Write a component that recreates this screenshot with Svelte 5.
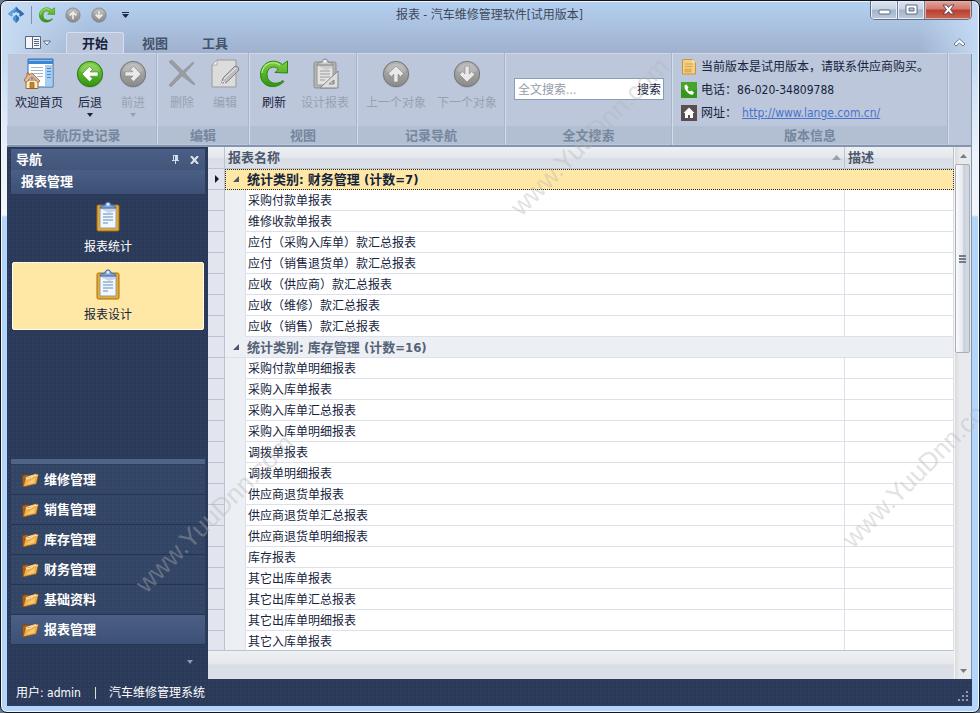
<script lang="ts">
	const tabs = ['开始', '视图', '工具'];
	const modules = ['维修管理', '销售管理', '库存管理', '财务管理', '基础资料', '报表管理'];

	const ribbon = [
		{
			title: '导航历史记录',
			items: [
				{ icon: 'home', label: '欢迎首页' },
				{ icon: 'back', label: '后退', menu: true },
				{ icon: 'forward', label: '前进', menu: true, disabled: true }
			]
		},
		{
			title: '编辑',
			items: [
				{ icon: 'delete', label: '删除', disabled: true },
				{ icon: 'edit', label: '编辑', disabled: true }
			]
		},
		{
			title: '视图',
			items: [
				{ icon: 'refresh', label: '刷新' },
				{ icon: 'design', label: '设计报表', disabled: true }
			]
		},
		{
			title: '记录导航',
			items: [
				{ icon: 'up', label: '上一个对象', disabled: true },
				{ icon: 'down', label: '下一个对象', disabled: true }
			]
		}
	];

	const groups = [
		{
			name: '财务管理',
			count: 7,
			rows: [
				'采购付款单报表',
				'维修收款单报表',
				'应付（采购入库单）款汇总报表',
				'应付（销售退货单）款汇总报表',
				'应收（供应商）款汇总报表',
				'应收（维修）款汇总报表',
				'应收（销售）款汇总报表'
			]
		},
		{
			name: '库存管理',
			count: 16,
			rows: [
				'采购付款单明细报表',
				'采购入库单报表',
				'采购入库单汇总报表',
				'采购入库单明细报表',
				'调拨单报表',
				'调拨单明细报表',
				'供应商退货单报表',
				'供应商退货单汇总报表',
				'供应商退货单明细报表',
				'库存报表',
				'其它出库单报表',
				'其它出库单汇总报表',
				'其它出库单明细报表',
				'其它入库单报表'
			]
		}
	];

	let activeTab = $state('开始');
	let activeItem = $state('报表设计');
	let activeModule = $state('报表管理');
	let query = $state('');
</script>

{#snippet arrowDisc(angle: number, green: boolean)}
	<circle cx="16" cy="16.5" r="13.2" fill="#7c8494" opacity=".35" />
	<circle cx="16" cy="16" r="12.6" fill={green ? 'url(#green)' : 'url(#grey)'} stroke={green ? '#2d7a12' : '#777'} />
	<path d="M6 13a10.5 10.5 0 0 1 20 0q-10 5-20 0z" fill="#fff" opacity=".18" />
	<path
		transform="rotate({angle} 16 16)"
		d="M8 16l7.500-7.500 3 3-2.500 2.500h8v4.200h-8l2.500 2.500-3 3z"
		fill={green ? '#fff' : '#e9e9e9'}
		stroke={green ? '#3f8f1c' : '#868686'}
		stroke-width=".6"
		stroke-linejoin="round"
	/>
{/snippet}

{#snippet clipboard(grey: boolean)}
	<rect x="5" y="4" width="22" height="26" rx="1.5" fill={grey ? '#b4b4b4' : '#e6ac2b'} stroke={grey ? '#8d8d8d' : '#a86a10'} />
	<path d="M8 7h16v20H8z" fill={grey ? '#e3e3e3' : '#f4f8fd'} stroke={grey ? '#999' : '#8d9db8'} />
	<path d="M9 8h14v2l-6 2z" fill={grey ? '#ccc' : '#c6d4e6'} />
	<path d="M11 13h10M11 16h10M11 19h10M11 22h5" stroke={grey ? '#999' : '#5f8ac4'} />
	<path d="M8 7c0-3 4-2 5-3 0-4 6-4 6 0 1 1 5 0 5 3z" fill={grey ? '#c9c9c9' : '#7ea8dd'} stroke={grey ? '#888' : '#3c66a4'} />
	<circle cx="16" cy="3.4" r="1.4" fill="#fff" opacity=".8" />
{/snippet}

{#snippet icon(name: string, size = 32)}
	<svg width={size} height={size} viewBox="0 0 32 32" aria-hidden="true">
		{#if name === 'home'}
			<path d="M5 1h25v28H5z" fill="#fff" stroke="#2f6fb0" />
			<path d="M5 1h25v5H5z" fill="#3d86cf" />
			<path d="M6 2h23v1H6z" fill="#8fc0ef" />
			<path d="M22 7h7v21h-7z" fill="#a9cdf0" />
			<path d="M8 9.500h12M8 12.500h12M10 15.500h10M14 18.500h6" stroke="#9fb6cf" />
			<path d="M24 10.500h4M24 13.500h4M24 16.500h4M24 19.500h4" stroke="#4d8bc9" />
			<path d="M3 22h12v8.500H3z" fill="#f9e9c8" stroke="#9b6a33" />
			<path d="M1 22l3-4v-3h2v2l3-2 8 8-2 1.500-6-6-6 6z" fill="#e7b98a" stroke="#9a5a2b" stroke-width=".8" />
			<path d="M7 24.500h4v6H7z" fill="#c98524" stroke="#85531a" stroke-width=".6" />
			<circle cx="9" cy="20.5" r="1.2" fill="#4b93d6" />
		{:else if name === 'back'}
			{@render arrowDisc(0, true)}
		{:else if name === 'forward'}
			{@render arrowDisc(180, false)}
		{:else if name === 'up'}
			{@render arrowDisc(90, false)}
		{:else if name === 'down'}
			{@render arrowDisc(270, false)}
		{:else if name === 'delete'}
			<path d="M4 3l2-1 11 11L27 4l1 1-9 10 10 11-1 1-12-9L5 29l-2-2 11-12L3 4z" fill="#9a9ca1" stroke="#888b91" stroke-width=".5" />
		{:else if name === 'edit'}
			<path d="M8 2h19v27H3V7z" fill="#dcdcdc" stroke="#999" />
			<path d="M8 2v5H3z" fill="#f3f3f3" stroke="#999" stroke-width=".7" />
			<path d="M12 27l2-7L26 8q4 0 4 4L18 24z" fill="#bdbdbd" stroke="#858585" />
			<path d="M15 21L27 10M12 27l4-2-2-2z" stroke="#f0f0f0" fill="#777" />
		{:else if name === 'refresh'}
			<path
				d="M24.500 6.500C14-1.500 2.500 6 2.500 16.500c0 12 14 16.500 23.500 7l-1-1c-7 5.500-16 2.500-16-6C9 9.500 15.500 7 20.500 11L17 14.500l12.500.5V3z"
				fill="url(#green)"
				stroke="#2d8217"
			/>
			<path d="M4 15C5 6 14 2 22 7" fill="none" stroke="#b6ee8c" stroke-width="1.200" />
		{:else if name === 'design'}
			{@render clipboard(true)}
			<path d="M29 13v17H11zM25 22v4h-5z" fill="#dedede" fill-rule="evenodd" stroke="#858585" />
		{:else if name === 'clipboard'}
			{@render clipboard(false)}
		{:else if name === 'folder'}
			<path d="M2 8l9-2 3 2 14-4 1 16-21 8H3z" fill="#a8601c" stroke="#6b3a0c" />
			<path d="M8 11l19-6v6l-17 6z" fill="#fbeecb" />
			<path d="M4 28L8 13l10-2 3-3 10-2-4 17z" fill="#eeb04e" stroke="#85501a" />
			<path d="M9 14l9-2 3-3 9-2" fill="none" stroke="#ffebb8" stroke-width="2" />
			<path d="M8 24L25 12l-2 9z" fill="#ffd88a" opacity=".7" />
		{:else if name === 'logo'}
			<path d="M16 1l6 6v6l-6-4z" fill="#2f6fb6" />
			<path d="M16 1l-6 6v6l6-4z" fill="#5aa5e4" />
			<path d="M9 7l7 2-7.500 10L1 14z" fill="#5ba3e0" />
			<path d="M23 7l-7 2 7.500 10L31 14z" fill="#2e6bb0" />
			<path d="M16 8l7 6-7 6-7-6z" fill="#cfe2f6" />
			<path d="M16 6l5 5-2 2-3-3-3 3-2-2z" fill="#3f86cc" />
			<path d="M16 15l5.500 5.500v4L16 30l-5.500-5.500v-4z" fill="#4a93d8" />
			<path d="M16 15l5.500 5.500v4L16 30z" fill="#3275bb" />
		{:else if name === 'note'}
			<path d="M3 1h20l6 6v23H3z" fill="#f3cf80" stroke="#c49444" stroke-width="2" />
			<path d="M23 1v6h6z" fill="#fff0c4" />
			<path d="M8 10h15M8 15h15" stroke="#d0a050" stroke-width="2" />
			<path d="M8 20h12v6H8z" fill="#e5b45c" stroke="#c9953f" />
		{:else if name === 'phone'}
			<rect width="32" height="32" fill="#34961b" />
			<path d="M0 0h32v14Q16 22 0 14z" fill="#5fb844" opacity=".45" />
			<path d="M7 7l4-2 4 6-2 3q1 4 5 5l3-2 5 4-2 4q-5 2-11-4Q6 14 7 7z" fill="#fff" />
		{:else if name === 'site'}
			<rect width="32" height="32" fill="#5c4d50" />
			<path d="M16 5L5 16h3v10h6v-6h4v6h6V16h3z" fill="#fff" />
		{/if}
	</svg>
{/snippet}

<svg class="defs" width="0" height="0" aria-hidden="true">
	<defs>
		<linearGradient id="green" x1="0" y1="0" x2="0" y2="1">
			<stop offset="0" stop-color="#7fd040" />
			<stop offset="1" stop-color="#2f9512" />
		</linearGradient>
		<linearGradient id="grey" x1="0" y1="0" x2="0" y2="1">
			<stop offset="0" stop-color="#b5b5b5" />
			<stop offset="1" stop-color="#8a8a8a" />
		</linearGradient>
	</defs>
</svg>

<div class="window">
	<header class="titlebar">
		<div class="quick">
			{@render icon('logo', 18)}
			<span class="rule"></span>
			<button aria-label="刷新">{@render icon('refresh', 18)}</button>
			<button aria-label="上一个对象">{@render icon('up', 18)}</button>
			<button aria-label="下一个对象">{@render icon('down', 18)}</button>
			<button aria-label="自定义">
				<svg width="9" height="6" viewBox="0 0 9 6"><path d="M1 0h7v1H1zM1 2h7L4.500 6z" fill="#1d2a42" /></svg>
			</button>
		</div>
		<h1>报表 - 汽车维修管理软件[试用版本]</h1>
		<div class="controls">
			<button aria-label="最小化">
				<svg width="13" height="12" viewBox="0 0 13 12"><rect x="1" y="6" width="11" height="4" rx="1" fill="#fff" stroke="#5a6a80" /></svg>
			</button>
			<button aria-label="最大化">
				<svg width="13" height="12" viewBox="0 0 13 12"><path d="M1 1h11v9H1zM4 4h5v3H4z" fill="#fff" fill-rule="evenodd" stroke="#5a6a80" /></svg>
			</button>
			<button class="close" aria-label="关闭">
				<svg width="13" height="12" viewBox="0 0 13 12"><path d="M1 1h3.500l2 2.500L8.500 1H12L8.500 5.500 12 10H8.500l-2-2.500-2 2.500H1l3.500-4.500z" fill="#fff" stroke="#5c4550" /></svg>
			</button>
		</div>
	</header>

	<nav class="tabs">
		<button class="app-menu" aria-label="菜单">
			<svg width="26" height="13" viewBox="0 0 26 13">
				<path d="M.5.500h15v12H.5z" fill="#f3f6fa" stroke="#59677e" />
				<path d="M7.500 1v11M9 3.500h5M9 5.500h5M9 7.500h5M9 9.500h5" stroke="#59677e" />
				<path d="M18.500 5h7L22 9z" fill="#fff" stroke="#59677e" />
			</svg>
		</button>
		{#each tabs as tab}
			<button class="tab" class:active={tab === activeTab} onclick={() => (activeTab = tab)}>{tab}</button>
		{/each}
		<button class="collapse" aria-label="折叠功能区">
			<svg width="13" height="9" viewBox="0 0 13 9"><path d="M1 6l5.500-5L12 6l-2 2-3.500-3L3 8z" fill="#fff" stroke="#66748a" /></svg>
		</button>
	</nav>

	<section class="ribbon">
		{#each ribbon as group}
			<div class="group">
				<div class="tools">
					{#each group.items as item}
						<button class="tool" disabled={item.disabled}>
							{@render icon(item.icon)}
							<span>{item.label}</span>
							{#if item.menu}<i class="caret"></i>{/if}
						</button>
					{/each}
				</div>
				<h2>{group.title}</h2>
			</div>
		{/each}
		<div class="group search-group">
			<form class="search" onsubmit={(e) => e.preventDefault()}>
				<input type="text" aria-label="全文搜索" placeholder="全文搜索..." bind:value={query} />
				<button>搜索</button>
			</form>
			<h2>全文搜索</h2>
		</div>
		<div class="group about">
			<div class="info">
				<p>{@render icon('note', 16)}当前版本是试用版本，请联系供应商购买。</p>
				<p>{@render icon('phone', 16)}电话：<span>86-020-34809788</span></p>
				<p>{@render icon('site', 16)}网址：<a href="http://www.lange.com.cn/">http://www.lange.com.cn/</a></p>
			</div>
			<h2>版本信息</h2>
		</div>
	</section>

	<main>
		<aside>
			<div class="panel-head">
				<h3>导航</h3>
				<button aria-label="固定">
					<svg width="7" height="9" viewBox="0 0 7 9"><path d="M2 0h4v5h1v1H4v3H3V6H0V5h1V0zM2 1v4h1V1z" fill="#d5dbe8" fill-rule="evenodd" /></svg>
				</button>
				<button aria-label="关闭导航">
					<svg width="9" height="8" viewBox="0 0 9 8"><path d="M1 0l7 8M8 0L1 8" stroke="#dfe4ee" stroke-width="2" /></svg>
				</button>
			</div>
			<h3 class="panel-title">报表管理</h3>
			<div class="links">
				{#each ['报表统计', '报表设计'] as item}
					<button class:selected={item === activeItem} onclick={() => (activeItem = item)}>
						{@render icon('clipboard')}
						<span>{item}</span>
					</button>
				{/each}
			</div>
			<div class="splitter"></div>
			<div class="modules">
				{#each modules as name}
					<button class:current={name === activeModule} onclick={() => (activeModule = name)}>
						{@render icon('folder', 18)}{name}
					</button>
				{/each}
			</div>
			<button class="overflow" aria-label="更多"><i class="caret"></i></button>
		</aside>

		<section class="grid">
			<div class="rows">
				<table>
					<colgroup>
						<col class="c-mark" />
						<col class="c-indent" />
						<col />
						<col class="c-desc" />
					</colgroup>
					<thead>
						<tr>
							<th></th>
							<th colspan="2">
								<div class="head">报表名称
									<svg width="9" height="5" viewBox="0 0 9 5"><path d="M4.500 0L9 5H0z" fill="#9a9fab" /></svg>
								</div>
							</th>
							<th>描述</th>
						</tr>
					</thead>
					<tbody>
						{#each groups as group, i}
							<tr class="category" class:focused={i === 0}>
								<td class="mark">
									{#if i === 0}<svg width="4" height="8" viewBox="0 0 4 8"><path d="M0 0l4 4-4 4z" fill="#111a2c" /></svg>{/if}
								</td>
								<td colspan="3">
									<svg width="6" height="6" viewBox="0 0 6 6"><path d="M6 0v6H0z" fill="#4b566b" /></svg>
									统计类别: {group.name} (计数={group.count})
								</td>
							</tr>
							{#each group.rows as row}
								<tr>
									<td class="mark"></td>
									<td class="indent"></td>
									<td>{row}</td>
									<td></td>
								</tr>
							{/each}
						{/each}
					</tbody>
				</table>
			</div>
			<div class="scrollbar">
				<button aria-label="向上滚动"><svg width="7" height="4" viewBox="0 0 7 4"><path d="M3.500 0L7 4H0z" fill="#777d88" /></svg></button>
				<div class="track">
					<div class="thumb"><i></i><i></i><i></i></div>
				</div>
				<button aria-label="向下滚动"><svg width="7" height="4" viewBox="0 0 7 4"><path d="M0 0h7L3.500 4z" fill="#777d88" /></svg></button>
			</div>
			<div class="grid-foot"></div>
		</section>
	</main>

	<footer>
		<span>用户: admin</span>
		<span class="bar"></span>
		<span>汽车维修管理系统</span>
		<svg class="grip" width="11" height="11" viewBox="0 0 11 11">
			<path d="M8 0h2v2H8zM4 4h2v2H4zM8 4h2v2H8zM0 8h2v2H0zM4 8h2v2H4zM8 8h2v2H8z" fill="#8e9bb5" />
		</svg>
	</footer>

	<span class="watermark w1">www.YuuDnn.com</span>
	<span class="watermark w2">www.YuuDnn.com</span>
	<span class="watermark w3">www.YuuDnn.com</span>
</div>

<style>
	:global(body) {
		margin: 0;
		background: #6f7888;
	}

	.defs {
		position: absolute;
	}

	.window {
		position: relative;
		box-sizing: border-box;
		height: 100vh;
		display: flex;
		flex-direction: column;
		padding: 0 7px 6px 6px;
		overflow: hidden;
		border: 1px solid #14161c;
		border-radius: 7px;
		background:
			linear-gradient(90deg, #c8dcf4, transparent 90px, transparent calc(100% - 60px), #c5daf3) 0 0 / 100% 52px no-repeat,
			linear-gradient(#b4d0f0, #9fb1cd) 0 0 / 100% 52px no-repeat,
			linear-gradient(#c3dcf6 0, #c5dcf5 60px, #eaf2fb 150px, #f2f6fc 214px, #b3d5fb 216px, #b3d5fb 100%);
		box-shadow: inset 0 0 0 1px #eef6ff;
		font: 12px/16px "DejaVu Sans Condensed", "Noto Sans CJK SC", sans-serif;
		color: #15233d;
	}

	h1,
	h2,
	h3,
	p {
		margin: 0;
	}

	button {
		display: flex;
		align-items: center;
		justify-content: center;
		margin: 0;
		padding: 0;
		border: 0;
		background: none;
		font: inherit;
		color: inherit;
	}

	svg {
		flex: none;
	}

	.caret {
		width: 0;
		border: 3px solid transparent;
		border-top: 4px solid currentColor;
		border-bottom: 0;
	}

	/* title bar */
	.titlebar {
		flex: none;
		display: grid;
		grid-template-columns: 1fr auto 1fr;
		align-items: start;
		height: 31px;
	}

	.quick {
		display: flex;
		align-items: center;
		gap: 8px;
		height: 28px;
	}

	.quick .rule {
		width: 1px;
		height: 18px;
		margin: 0 -2px;
		background: #7f93b0;
	}

	.quick button:last-child {
		margin-left: 5px;
	}

	h1 {
		font-size: 12px;
		font-weight: 400;
		line-height: 28px;
		color: #3d4759;
	}

	.controls {
		justify-self: end;
		display: flex;
		border: 1px solid #5f6f87;
		border-top: 0;
		border-radius: 0 0 5px 5px;
		overflow: hidden;
	}

	.controls button {
		width: 27px;
		height: 18px;
		border-right: 1px solid #6f7f96;
		background: linear-gradient(#dbe5f2, #c7d3e4 45%, #a3b3ca 50%, #bccadd);
		box-shadow: inset 0 0 0 1px #e8eff8;
	}

	.controls .close {
		width: 46px;
		border-right: 0;
		background: linear-gradient(#e3a79c, #d0776a 45%, #b8402f 50%, #cc6553);
		box-shadow: inset 0 0 0 1px #e4afa5;
	}

	/* ribbon tabs */
	.tabs {
		flex: none;
		display: flex;
		gap: 2px;
		height: 21px;
		padding: 0 6px 0 18px;
	}

	.app-menu {
		margin-right: 13px;
	}

	.tab {
		box-sizing: border-box;
		padding: 2px 15px 0;
		border: 1px solid transparent;
		border-bottom: 0;
		border-radius: 3px 3px 0 0;
		font-size: 13px;
		font-weight: 700;
		color: #44536c;
	}

	.tab.active {
		border-color: #d5dfee;
		background: #bdc7db;
		color: #15233d;
	}

	.collapse {
		margin-left: auto;
	}

	/* ribbon */
	.ribbon {
		flex: none;
		display: flex;
		box-sizing: border-box;
		height: 94px;
		border-bottom: 2px solid #8495ae;
		background: #bdc7db;
		box-shadow: inset 1px 1px #cdd7e7, inset -1px 0 #8495ae;
	}

	.group {
		display: flex;
		flex-direction: column;
		justify-content: space-between;
		border-right: 1px solid #d3dceb;
		box-shadow: inset -1px 0 #a7b4ca;
	}

	.tools {
		display: flex;
		gap: 1px;
		padding: 5px 3px 0;
	}

	.tool {
		flex-direction: column;
		justify-content: flex-start;
		min-width: 42px;
		padding: 0 5px;
	}

	.tool span {
		margin-top: 5px;
	}

	.tool .caret {
		margin-top: 2px;
	}

	.tool:disabled {
		color: #99a1b1;
	}

	h2 {
		height: 18px;
		margin: 0 1px 1px 0;
		background: #b2bed2;
		font-size: 13px;
		font-weight: 700;
		line-height: 20px;
		text-align: center;
		color: #75869e;
	}

	.search-group {
		width: 166px;
	}

	.search {
		display: flex;
		margin: 25px 8px 0;
		border: 1px solid #8b9cb5;
		background: #fff;
	}

	.search input {
		flex: 1;
		min-width: 0;
		height: 20px;
		box-sizing: border-box;
		padding: 2px 3px 0;
		border: 0;
		background: none;
		font: inherit;
	}

	.search input::placeholder {
		color: #949cab;
	}

	.search button {
		padding: 2px 2px 0;
	}

	.about {
		width: 275px;
	}

	.info {
		padding: 2px 8px 0;
	}

	.info p {
		display: flex;
		align-items: center;
		height: 23px;
		white-space: nowrap;
	}

	.info svg {
		margin-right: 4px;
	}

	.info a {
		margin-left: 5px;
		color: #4674cc;
	}

	/* workspace */
	main {
		flex: 1;
		min-height: 0;
		display: flex;
		background: #2b3a59;
	}

	aside {
		flex: none;
		display: flex;
		flex-direction: column;
		width: 194px;
		padding: 2px 3px 0 4px;
		background: radial-gradient(#2f3f5f 1px, transparent 1px) 0 0 / 4px 4px;
		color: #fff;
	}

	.panel-head {
		display: flex;
		align-items: center;
		gap: 11px;
		height: 21px;
		padding: 0 6px 0 5px;
		background: linear-gradient(#4b5e85, #42567b);
	}

	h3 {
		flex: 1;
		font-size: 13px;
		font-weight: 700;
		line-height: 22px;
	}

	.panel-title {
		flex: none;
		padding-left: 10px;
		background: linear-gradient(#4b5e85, #3c5075);
		line-height: 24px;
	}

	.links {
		flex: 1;
		min-height: 0;
		padding: 0 1px;
	}

	.links button {
		flex-direction: column;
		gap: 6px;
		box-sizing: border-box;
		width: 100%;
		height: 68px;
		border: 1px solid transparent;
		border-radius: 2px;
	}

	.links .selected {
		border-color: #fffaf0;
		background: #ffe8a6;
		color: #15233d;
	}

	.splitter {
		height: 5px;
		margin-bottom: 1px;
		background: #506487;
	}

	.modules button {
		justify-content: flex-start;
		gap: 5px;
		box-sizing: border-box;
		width: 100%;
		height: 30px;
		padding-left: 10px;
		border-bottom: 1px solid #263552;
		background:
			radial-gradient(#374a6c 1px, transparent 1px) 0 0 / 4px 4px,
			#334565;
		font-size: 13px;
		font-weight: 700;
	}

	.modules .current {
		background: linear-gradient(#4b5e85, #3d5176);
	}

	.overflow {
		align-self: flex-end;
		width: 31px;
		height: 34px;
		color: #8d9ab3;
	}

	/* report grid */
	.grid {
		flex: 1;
		min-width: 0;
		display: grid;
		grid-template: 1fr 29px / 1fr 17px;
		border-right: 1px solid #8495ae;
		background: #fff;
	}

	.rows {
		overflow: hidden;
		min-height: 0;
	}

	table {
		width: 100%;
		table-layout: fixed;
		border-spacing: 0;
	}

	.c-mark {
		width: 17px;
	}

	.c-indent {
		width: 21px;
	}

	.c-desc {
		width: 109px;
	}

	th {
		height: 21px;
		padding: 0 3px;
		border-right: 1px solid #bcc3d2;
		border-bottom: 1px solid #bcc3d2;
		background: linear-gradient(#eef1f4, #e3e6ec 50%, #d9dde6 55%, #dce0e8);
		font-size: 13px;
		font-weight: 700;
		text-align: left;
		color: #4c586c;
	}

	.head {
		display: flex;
		align-items: center;
		justify-content: space-between;
	}

	td {
		height: 18px;
		padding: 2px 2px 0;
		border-right: 1px solid #dde0ea;
		border-bottom: 1px solid #dde0ea;
		line-height: 18px;
		white-space: nowrap;
	}

	.mark {
		padding: 0 0 0 7px;
		border-color: #bcc2d3;
		background: #e2e5ed;
		line-height: 0;
	}

	.indent {
		border-bottom-color: #ecf0f4;
		background: #ecf0f4;
	}

	.category td:last-child {
		padding-left: 8px;
		background: #ecf0f4;
		font-size: 13px;
		font-weight: 700;
		color: #566176;
	}

	.category svg {
		margin-right: 4px;
		vertical-align: 2px;
	}

	.category .mark svg {
		margin: 0;
	}

	.category.focused td:last-child {
		padding-top: 1px;
		padding-left: 7px;
		border: 1px dotted #222b3c;
		background: #ffe8a6;
		color: #15233d;
	}

	.scrollbar {
		grid-row: 1 / 3;
		grid-column: 2;
		display: flex;
		flex-direction: column;
		border-left: 1px solid #f5f5f5;
		background: linear-gradient(90deg, #dadbdd, #e9eaed 30%);
	}

	.scrollbar button {
		height: 17px;
	}

	.track {
		flex: 1;
	}

	.thumb {
		display: flex;
		flex-direction: column;
		align-items: center;
		justify-content: center;
		gap: 1px;
		box-sizing: border-box;
		width: 15px;
		height: 38%;
		border: 1px solid #a8adb6;
		border-radius: 2px;
		background: linear-gradient(90deg, #fafbfc, #e5e9ee 50%, #cbd2dc 55%, #d3dae3);
	}

	.thumb i {
		width: 7px;
		height: 2px;
		background: #747d8c;
	}

	.grid-foot {
		box-sizing: border-box;
		border-top: 1px solid #bcc2d3;
		background: linear-gradient(#eef1f4, #e5e7ea 45%, #d9dde6 50%, #dce0e8);
	}

	/* status bar */
	footer {
		flex: none;
		display: flex;
		align-items: center;
		height: 27px;
		padding: 0 3px 0 9px;
		background:
			radial-gradient(#2f3f5f 1px, transparent 1px) 0 0 / 4px 4px,
			#2b3a59;
		color: #fff;
	}

	.bar {
		width: 1px;
		height: 12px;
		margin: 0 13px 0 14px;
		background: #d5e6c8;
	}

	.grip {
		margin-left: auto;
		align-self: flex-end;
		margin-bottom: 4px;
	}

	/* diagonal overlay marks */
	.watermark {
		position: absolute;
		transform: rotate(-45deg);
		transform-origin: 0 100%;
		font: 26px/26px "Liberation Sans", Arial, sans-serif;
		color: rgb(180 180 180 / 40%);
		pointer-events: none;
	}

	.w1 {
		left: 148px;
		top: 570px;
	}

	.w2 {
		left: 523px;
		top: 193px;
	}

	.w3 {
		left: 855px;
		top: 525px;
	}
</style>
